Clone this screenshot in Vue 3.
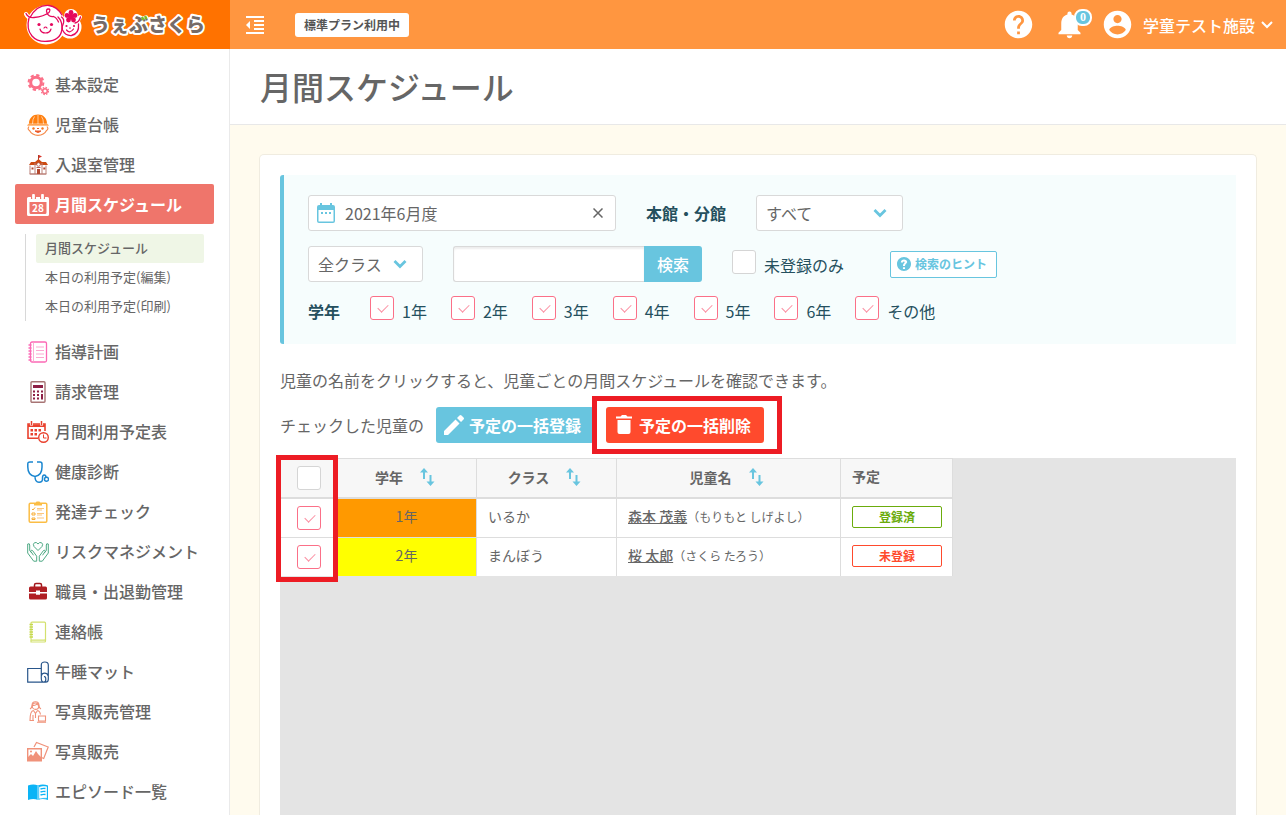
<script setup>
import { ref } from 'vue'

const menu = [
  { label: '基本設定', icon: '<g fill="none" stroke="#fb7088"><circle cx="9" cy="8.500" r="5.300" stroke-width="3"/><circle cx="9" cy="8.500" r="7.400" stroke-width="2" stroke-dasharray="3.300 2.510"/><circle cx="18" cy="17" r="2.300" stroke-width="1.600"/><circle cx="18" cy="17" r="3.600" stroke-width="1.200" stroke-dasharray="1.600 1.230"/></g>' },
  { label: '児童台帳', icon: '<path d="M2 9.500C2 4 6 .600 11 .600S20 4 20 9.500L22 11.500H0Z" fill="#ff7f0e"/><path d="M11 1v9M7.500 2.500Q5.500 5 5.500 10M14.500 2.500Q16.500 5 16.500 10M1 10h20" stroke="#fff" stroke-width=".6" fill="none"/><path d="M2 12.500Q0 15 2.500 16.500Q5 21.300 11 21.300T19.500 16.500Q22 15 20 12.500" fill="none" stroke="#f58b4c" stroke-width="1.200"/><circle cx="6.500" cy="14.500" r="1.200" fill="#f4751f"/><circle cx="15.500" cy="14.500" r="1.200" fill="#f4751f"/><path d="M8 17h6q-3 3-6 0M10 14.500h2" stroke="#ec5a29" fill="#ec5a29"/>' },
  { label: '入退室管理', icon: '<path d="M11.500 6V1" stroke="#b33a28"/><path d="M12 1l3 1.500-3 1.500z" fill="#d9352b"/><path d="M2 11l2-3h4l3.500-3 3.500 3h4l2 3z" fill="#cc4a12"/><path d="M3 11.500v8.500h16v-8.500M8 9v11M15 9v11M2.500 20h17" fill="none" stroke="#bb8078"/><circle cx="11.500" cy="10.500" r="1.800" fill="#fff" stroke="#b3584a" stroke-width=".8"/><path d="M4.500 13.500h2v2h-2zM16.300 13.500h2v2h-2zM10 15h3v5h-3z" fill="#b3482f"/><path d="M9.500 13.500h4" stroke="#b3584a"/>' },
  { label: '月間スケジュール', active: true, icon: '<path d="M1.500 3h19q1.500 0 1.500 1.500v16q0 1.500-1.500 1.500h-19Q0 22 0 20.500v-16Q0 3 1.500 3zM2.500 8v10.500q0 1.500 1.500 1.500h14q1.500 0 1.500-1.500V8z" fill="#fff" fill-rule="evenodd"/><path d="M6.500 1v4M15.500 1v4" stroke="#ef756b" stroke-width="5"/><path d="M6.500 1.200v3M15.500 1.200v3" stroke="#fff" stroke-width="2.800" stroke-linecap="round"/><text x="11" y="17.500" font-family="Noto Sans CJK JP, sans-serif" font-size="10" font-weight="700" text-anchor="middle" fill="#fff">28</text>' },
  { label: '指導計画', icon: '<rect x="3.500" y="1" width="16" height="20" rx="1.500" fill="#fff" stroke="#fb69b5" stroke-width="1.300"/><path d="M6.500 1v20" stroke="#fb9acb" stroke-width=".8"/><path d="M1.500 4h3M1.500 7h3M1.500 10h3M1.500 13h3M1.500 16h3M1.500 19h3" stroke="#fb69b5" stroke-width="1.300"/><path d="M9 6h8M9 9.500h8M9 13h8M9 16.500h8" stroke="#fca9d2"/>' },
  { label: '請求管理', icon: '<rect x="4" y=".8" width="14" height="20.400" rx="1" fill="#fff" stroke="#a77474" stroke-width="1.400"/><path d="M6 4h10v3H6z" fill="#8d1f45"/><path d="M6 9.500h2v2H6zM10 9.500h2v2h-2zM14 9.500h2v2h-2zM6 13h2v2H6zM10 13h2v2h-2zM6 16.500h2v2H6zM10 16.500h2v2h-2zM14 13h2v5.500h-2z" fill="#8d1f45"/>' },
  { label: '月間利用予定表', icon: '<path d="M11 17.200H1V3h17v7" fill="none" stroke="#e9412e" stroke-width="1.600"/><path d="M1 3.500h17v2.500H1z" fill="#e9412e"/><path d="M4.500 0v4.500M14.500 0v4.500" stroke="#fff" stroke-width="3"/><path d="M4.500 0v4M14.500 0v4" stroke="#e9412e" stroke-width="1.500"/><path d="M3.500 8h2.500v2.500H3.500zM7.500 8H10v2.500H7.500zM11.500 8H14v2.500h-2.500zM3.500 12H6v2.500H3.500zM7.500 12H10v2.500H7.500z" fill="#e9412e"/><circle cx="16.500" cy="16.500" r="4.800" fill="#fff" stroke="#e9412e" stroke-width="1.400"/><path d="M16.500 13.500v3.500h3" fill="none" stroke="#e9412e"/>' },
  { label: '健康診断', icon: '<path d="M6 1H3Q.8 1 .8 3v3q0 8.500 7.200 9.500Q15 14.500 15 6V3q0-2-2-2h-3M8 15.500q0 5.700 4 5.700T15.500 17q0-3 1.700-3t1.800 2.500" fill="none" stroke="#1a86d0" stroke-width="1.500"/><circle cx="19.500" cy="18.300" r="2" fill="none" stroke="#1a86d0" stroke-width="1.400"/>' },
  { label: '発達チェック', icon: '<rect x="2.200" y="2.200" width="17.600" height="19" rx="1.200" fill="none" stroke="#fbbd45" stroke-width="1.500"/><path d="M7 2.500q2 0 2.500-2h3q.5 2 2.500 2v2H7z" fill="#fbbd45"/><path d="M5 8l1 1 2-2.500M5 12h3v2H5zM5 17h3v1.500H5z" fill="none" stroke="#f8ad35"/><path d="M10 7.500h7M10 9h5M10 12.500h7M10 14h5M10 17h7" stroke="#fbc780"/>' },
  { label: 'リスクマネジメント', icon: '<path d="M11 9.500L7 5.500Q5.500 3 7.500 1.700 9.500.8 11 3 12.500.8 14.500 1.700 16.500 3 15 5.500z" fill="none" stroke="#4ea984"/><path d="M.7 3v9l6 8.200h3v-5L5.500 9.500q-1.500-1-1.800.8l2.800 4M.7 3q2-1 2 1v5.500l2 2.500" fill="none" stroke="#4ea984"/><path d="M21.300 3v9l-6 8.200h-3v-5l4.200-5.700q1.500-1 1.800.8l-2.800 4M21.300 3q-2-1-2 1v5.500l-2 2.500" fill="none" stroke="#4ea984"/>' },
  { label: '職員・出退勤管理', icon: '<path d="M7.500 6V4q0-1.500 1.500-1.500h4q1.500 0 1.500 1.500v2" fill="none" stroke="#a3191d" stroke-width="1.500"/><path d="M3.500 5.500h15q1.500 0 1.500 1.500v4h-7V9.500H9V11H2V7q0-1.500 1.500-1.500zM2 12.500h7v1.300h4v-1.300h7V17q0 1.500-1.500 1.500h-15Q2 18.500 2 17z" fill="#b01e23"/>' },
  { label: '連絡帳', icon: '<rect x="4" y="1.200" width="14.500" height="18" rx="1" fill="#fff" stroke="#d3e16e" stroke-width="1.200"/><path d="M4 19v2h13.500q1 0 1-1v-2" fill="none" stroke="#d3e16e" stroke-width="1.200"/><path d="M2.500 3.500h3.500M2.500 6h3.500M2.500 8.500h3.500M2.500 11h3.500M2.500 13.500h3.500M2.500 16h3.500" stroke="#c6d94f" stroke-width="1.400"/>' },
  { label: '午睡マット', icon: '<path d="M14 7.500H.7v13.700h18q2.600 0 2.600-3V4q0-3-3.500-3T14.300 4v13.500q0 3.500 2.500 3.500 2 0 2-2.800t-1.800-2.500M14.300 15q.5-2.800 3.300-2.800T21.300 15" fill="none" stroke="#29568b" stroke-width="1.200"/>' },
  { label: '写真販売管理', icon: '<g fill="none" stroke="#f0927a" stroke-width="1.100"><circle cx="8.500" cy="5.200" r="3.200"/><path d="M3 8Q5 7 5 4.500 5 .8 8.500.8T12 4.500Q12 7 14 8M5 4.500q4 0 5-1.500 1 1.500 2 1.500M6.500 9.500Q3 10 3 19.500h4M10.500 9.500q2.500.5 3 4M6.500 9.500l2 3 2-3M8.500 12v5M6 14v5"/><path d="M11.500 15h7v5h-7zM10 21.300h9"/></g>' },
  { label: '写真販売', icon: '<path d="M7 6L9.500 1.500 21.200 6l-4.500 11.500-2.200-1" fill="none" stroke="#f0927a" stroke-width="1.200"/><path d="M.7 7.700h13.600v12H.7z" fill="#fff" stroke="#f0927a" stroke-width="1.400"/><path d="M1 19v-3l3-3 2 2 3-5 2 3 3 3v4H1z" fill="#f0927a"/><circle cx="4" cy="10.500" r="1" fill="#f0927a"/>' },
  { label: 'エピソード一覧', icon: '<path d="M1 4.500q5.500-2 10 0 4.500-2 10 0v14.500q-5.500-2-10 0-4.500-2-10 0z" fill="#0bb4f6"/><path d="M11 5v14M12.500 6.300q3.500-1.300 7-.5v11q-3.500-.5-7 .5z" fill="#fff" stroke="#fff" stroke-width=".7"/><path d="M13.500 8q2.500-1 5-.5M13.500 11q2.500-1 5-.5M13.500 14q2.500-1 5-.5" fill="none" stroke="#0bb4f6" stroke-width="1.400"/>' }
]
const subMenu = ['月間スケジュール', '本日の利用予定(編集)', '本日の利用予定(印刷)']
const grades = ref(['1年', '2年', '3年', '4年', '5年', '6年', 'その他'].map(name => ({ name, checked: true })))
const month = ref('2021年6月度')
const keyword = ref('')
const unregistered = ref(false)
const columns = ['学年', 'クラス', '児童名']
const rows = ref([
  { grade: '1年', tone: 'orange', group: 'いるか', name: '森本 茂義', kana: '（もりもと しげよし）', status: '登録済', done: true, checked: true },
  { grade: '2年', tone: 'yellow', group: 'まんぼう', name: '桜 太郎', kana: '（さくら たろう）', status: '未登録', done: false, checked: true }
])
</script>

<template>
  <div class="app">
    <header class="topbar">
      <a class="logo" href="#" aria-label="うぇぶさくら">
        <svg width="184" height="46" viewBox="0 0 184 46">
          <g stroke-linecap="round" stroke-linejoin="round">
            <g fill="#fff" stroke="#fff" stroke-width="4">
              <circle cx="22" cy="24" r="17.500" /><circle cx="46" cy="26" r="9.500" />
              <path d="M2 13q2 4 5 4M56 16l-3 5" />
              <circle cx="47" cy="15" r="5" />
            </g>
            <g fill="none" stroke="#e5085d" stroke-width="1.300">
              <path d="M2 12.500q2 4.500 8 4 10-1 15-5 2-3.500-.5-3.500-3 0-1.500 4 2 4 6.500 3.500 3 1 5 5.500" />
              <path d="M6 16.500Q13 3.500 25 4.500q8 1 13 9.500" />
              <path d="M5 17Q2 28 8 35t18 5 12-14q0-6-4-10" />
              <path d="M37.500 16q3 2 2 6-2 4-1 7 3 6 9 5.500 8-2 7-11.500M51 22q4-.5 5.500-6" />
              <path d="M16 28q1 4 5.500 4t5.500-4M20 27q1.500-2 3 0M42.500 29q3.500 4 7-1M45.500 27h1" stroke-width="1.200" />
            </g>
            <g fill="#e5085d"><circle cx="15" cy="23.500" r="1.600" /><circle cx="27.500" cy="23.500" r="1.600" /><circle cx="42.500" cy="25" r="1.100" /><circle cx="50" cy="25" r="1.100" />
              <circle cx="47" cy="11.500" r="2.400" /><circle cx="51" cy="14.500" r="2.400" /><circle cx="49.500" cy="19" r="2.400" /><circle cx="44.500" cy="19" r="2.400" /><circle cx="43" cy="14.500" r="2.400" /><circle cx="47" cy="15.700" r="3" /></g>
          </g>
          <text class="logo-text" x="67" y="31">うぇぶさくら</text>
          <path d="M118 16l1.500 3M121 15l1.500 3" stroke="#7fbe26" stroke-width="2.400" />
        </svg>
      </a>
      <button class="icon-button fold" aria-label="メニューを閉じる">
        <svg width="18" height="18" viewBox="0 0 18 18"><path d="M0 1h18M8 5h10M8 9h10M8 13h10M0 17h18" stroke="#fff" stroke-width="2" /><path d="M4 5v8L0 9z" fill="#fff" /></svg>
      </button>
      <span class="plan">標準プラン利用中</span>
      <nav class="tools">
        <button class="icon-button" aria-label="ヘルプ"><svg width="33" height="33" viewBox="0 0 24 24"><path fill="#fff" d="M12 2C6.480 2 2 6.480 2 12s4.480 10 10 10 10-4.480 10-10S17.520 2 12 2zm1 17h-2v-2h2v2zm2.070-7.750l-.9.920C13.450 12.900 13 13.500 13 15h-2v-.5c0-1.100.45-2.100 1.170-2.830l1.240-1.260c.37-.36.59-.86.59-1.410 0-1.100-.9-2-2-2s-2 .9-2 2H8c0-2.210 1.790-4 4-4s4 1.790 4 4c0 .88-.36 1.680-.93 2.250z" /></svg></button>
        <button class="icon-button bell" aria-label="お知らせ"><svg width="33" height="33" viewBox="0 0 24 24"><path fill="#fff" d="M12 22c1.100 0 2-.9 2-2h-4c0 1.100.89 2 2 2zm6-6v-5c0-3.070-1.640-5.640-4.500-6.320V4c0-.83-.67-1.500-1.500-1.500s-1.500.67-1.500 1.500v.68C7.630 5.360 6 7.920 6 11v5l-2 2v1h16v-1l-2-2z" /></svg><span class="count">0</span></button>
        <button class="account">
          <svg width="33" height="33" viewBox="0 0 24 24"><path fill="#fff" d="M12 2C6.480 2 2 6.480 2 12s4.480 10 10 10 10-4.480 10-10S17.520 2 12 2zm0 3c1.660 0 3 1.340 3 3s-1.340 3-3 3-3-1.340-3-3 1.340-3 3-3zm0 14.200c-2.500 0-4.710-1.280-6-3.220.03-1.990 4-3.080 6-3.080 1.990 0 5.970 1.090 6 3.080-1.290 1.940-3.500 3.220-6 3.220z" /></svg>
          <span>学童テスト施設</span>
          <svg width="12" height="8" viewBox="0 0 12 8"><path d="M1 1l5 5 5-5" fill="none" stroke="#fff" stroke-width="2" /></svg>
        </button>
      </nav>
    </header>

    <div class="body">
      <aside class="sidebar">
        <ul class="menu">
          <li v-for="item in menu" :key="item.label">
            <a href="#" class="menu-item" :class="{ active: item.active }">
              <svg width="22" height="22" viewBox="0 0 22 22" v-html="item.icon"></svg>{{ item.label }}
            </a>
            <ul v-if="item.active" class="submenu">
              <li v-for="(sub, i) in subMenu" :key="sub"><a href="#" :class="{ current: i === 0 }">{{ sub }}</a></li>
            </ul>
          </li>
        </ul>
      </aside>

      <main class="main">
        <div class="page-title"><h1>月間スケジュール</h1></div>
        <section class="card">
          <form class="filter" @submit.prevent>
            <div class="row">
              <div class="field date">
                <svg width="18" height="20" viewBox="0 0 18 20"><path fill="#68c5df" fill-rule="evenodd" d="M3 0h2v2h8V0h2v2h1q2 0 2 2v14q0 2-2 2H2q-2 0-2-2V4q0-2 2-2h1zM1.500 7v11q0 .5.500.5h14q.5 0 .5-.5V7z" /><path d="M4 10h2M8 10h2M12 10h2" stroke="#68c5df" stroke-width="2" /></svg>
                <input v-model="month" type="text" aria-label="対象月" />
                <button type="button" class="clear" aria-label="クリア" @click="month = ''"><svg width="10" height="10" viewBox="0 0 10 10"><path d="M.5.5l9 9M9.500.5l-9 9" stroke="#666" stroke-width="1.500" /></svg></button>
              </div>
              <label class="caption branch-label" for="branch">本館・分館</label>
              <div class="field select branch">
                <select id="branch"><option>すべて</option></select>
                <svg width="14" height="10" viewBox="0 0 14 10"><path d="M1.500 2L7 7.500 12.500 2" fill="none" stroke="#68c5df" stroke-width="2.800" /></svg>
              </div>
            </div>
            <div class="row second">
              <div class="field select class">
                <select aria-label="クラス"><option>全クラス</option></select>
                <svg width="14" height="10" viewBox="0 0 14 10"><path d="M1.500 2L7 7.500 12.500 2" fill="none" stroke="#68c5df" stroke-width="2.800" /></svg>
              </div>
              <div class="search"><input v-model="keyword" type="text" aria-label="検索キーワード" /><button type="submit">検索</button></div>
              <label class="check unregistered"><input v-model="unregistered" type="checkbox" />未登録のみ</label>
              <button type="button" class="hint">
                <svg width="14" height="14" viewBox="2 2 20 20"><path fill="#68c5df" d="M12 2C6.480 2 2 6.480 2 12s4.480 10 10 10 10-4.480 10-10S17.520 2 12 2zm1.500 17h-3v-2.500h3v2.500zm1.500-7.500c-1 1-1.500 1.500-1.500 3.500h-3c0-2 .5-3 1.700-4.200 1.300-1.300.8-2.500-.2-2.500s-1.500.7-1.500 1.700h-3c0-3 2-4.500 4.500-4.500s4.500 1.500 4.500 3.800c0 1-.6 1.500-1.500 2.200z" /></svg>検索のヒント
              </button>
            </div>
            <div class="row grades" role="group" aria-labelledby="grade-caption">
              <span id="grade-caption" class="caption">学年</span>
              <label v-for="grade in grades" :key="grade.name" class="check"><input v-model="grade.checked" type="checkbox" />{{ grade.name }}</label>
            </div>
          </form>

          <p class="note">児童の名前をクリックすると、児童ごとの月間スケジュールを確認できます。</p>
          <div class="actions">
            <span>チェックした児童の</span>
            <button class="bulk register"><svg width="20" height="20" viewBox="0 0 20 20"><path fill="#fff" d="M0 16L11.500 4.500l4 4L4 20H0zM13 3l2.500-2.500q1-1 2 0l2 2q1 1 0 2L17 7z" /></svg>予定の一括登録</button>
            <div class="marked">
              <button class="bulk delete"><svg width="16" height="20" viewBox="0 0 16 20"><path fill="#fff" d="M0 1.500h4.500L6 0h4l1.500 1.500H16v2H0zM1.500 5h13v12q0 2-2 2h-9q-2 0-2-2z" /></svg>予定の一括削除</button>
            </div>
          </div>

          <div class="grid">
            <table>
              <colgroup><col class="c1" /><col class="c2" /><col class="c3" /><col class="c4" /><col class="c5" /></colgroup>
              <thead>
                <tr>
                  <th class="pick"><input type="checkbox" aria-label="すべて選択" /></th>
                  <th v-for="column in columns" :key="column">
                    <button class="sort">{{ column }}<svg width="15" height="18" viewBox="0 0 15 18"><path d="M4 2v9M10.500 7v9" stroke="#68c5df" stroke-width="2" /><path d="M0 4.500L4 0l4 4.500zM6.500 13.500l4 4.500 4-4.500z" fill="#68c5df" /></svg></button>
                  </th>
                  <th class="plain">予定</th>
                </tr>
              </thead>
              <tbody>
                <tr v-for="row in rows" :key="row.name">
                  <td class="pick"><input v-model="row.checked" type="checkbox" :aria-label="row.name" /></td>
                  <td class="grade" :class="row.tone">{{ row.grade }}</td>
                  <td>{{ row.group }}</td>
                  <td><a href="#">{{ row.name }}</a><small>{{ row.kana }}</small></td>
                  <td class="state"><span class="status" :class="{ done: row.done }">{{ row.status }}</span></td>
                </tr>
              </tbody>
            </table>
          </div>
        </section>
      </main>
    </div>
  </div>
</template>

<style>
body { margin: 0; }
</style>

<style scoped>
*, *::after { box-sizing: border-box; }
.app { display: flex; flex-direction: column; height: 100vh; overflow: hidden; color: #666; background: #fff; font: 400 16px/24px "Noto Sans CJK JP", sans-serif; }
button, input, select { margin: 0; font: inherit; color: inherit; }
button { border: 0; padding: 0; background: none; cursor: pointer; }
a { color: inherit; text-decoration: none; }
svg { display: block; flex: none; }
ul { margin: 0; padding: 0; list-style: none; }

.topbar { display: flex; align-items: center; flex: none; height: 49px; background: #ff9640; color: #fff; }
.logo { flex: none; width: 230px; height: 49px; padding: 1px 0 0 24px; background: #ff7200; }
.logo-text { font-size: 19px; font-weight: 900; fill: #766b68; stroke: #fff; stroke-width: 4px; stroke-linejoin: round; paint-order: stroke; }
.fold { margin: 0 31px 0 16px; }
.plan { padding: 0 9px; border-radius: 3px; background: #fff; color: #555; font-size: 12px; font-weight: 700; }
.tools { display: flex; align-items: center; margin-left: auto; padding-right: 13px; }
.bell { position: relative; margin: 0 15px 0 18px; }
.count { position: absolute; top: 1px; right: -6px; width: 18px; height: 17px; border: 2px solid #fff; border-radius: 8px; background: #68c5df; color: #fff; font: 700 12px/13px "Liberation Serif", serif; text-align: center; }
.account { display: flex; align-items: center; gap: 9px; font-weight: 500; line-height: 22px; }
.account svg:last-child { margin-left: -3px; }

.body { display: flex; flex: 1; min-height: 0; }
.sidebar { flex: none; width: 230px; padding: 15px 15px 0; border-right: 1px solid #eaeaea; overflow: hidden; }
.menu-item { display: flex; align-items: center; gap: 6px; height: 40px; padding-left: 12px; border-radius: 2px; font-weight: 500; white-space: nowrap; }
.menu-item svg { margin-top: 2px; }
.menu-item.active { background: #ef756b; color: #fff; font-weight: 700; }
.submenu { margin: 10px; padding-left: 10px; border-left: 1px solid #d8d8d8; }
.submenu a { display: block; padding: 0 0 2px 9px; border-radius: 2px; font-size: 13px; line-height: 27px; }
.submenu .current { background: #eff6e6; font-weight: 500; }

.main { display: flex; flex-direction: column; flex: 1; min-width: 0; background: #fffbee; }
.page-title { flex: none; padding: 17px 30px 18px; border-bottom: 1px solid #e8e8e8; background: #fff; }
h1 { margin: 0; font-size: 32px; line-height: 40px; font-weight: 500; }
.card { display: flex; flex-direction: column; flex: 1; min-height: 0; margin: 29px 29px 0; padding: 20px 20px 0; border: 1px solid #f0ece0; border-bottom: 0; border-radius: 5px 5px 0 0; background: #fff; }

.filter { flex: none; padding: 20px 24px 18px; border-left: 4px solid #68c5df; border-radius: 3px 0 0 3px; background: #f6fdfd; color: #25505e; }
.row { display: flex; align-items: center; }
.second { margin-top: 15px; }
.field { display: flex; align-items: center; height: 36px; border: 1px solid #d9d9d9; border-radius: 3px; background: #fff; color: #666; }
.date { width: 308px; padding: 0 12px 0 8px; }
.date input { flex: 1; min-width: 0; padding: 0 0 0 10px; border: 0; background: none; outline: 0; }
.caption { font-weight: 700; }
.branch-label { margin: 0 30px; }
.select { position: relative; }
.select select { width: 100%; height: 34px; padding: 0 30px 0 9px; border: 0; background: none; appearance: none; outline: 0; }
.select svg { position: absolute; top: 12px; right: 15px; pointer-events: none; }
.branch { width: 147px; }
.class { width: 115px; }
.search { display: flex; height: 36px; margin: 0 30px; }
.search input { width: 191px; padding: 0 8px; border: 1px solid #d9d9d9; border-right: 0; border-radius: 3px 0 0 3px; box-shadow: inset 0 2px 2px #eee; outline: 0; }
.search button { padding: 0 13px; border-radius: 0 3px 3px 0; background: #68c5df; color: #fff; font-weight: 500; }
.check { display: flex; align-items: flex-start; gap: 8px; line-height: 30px; }
.unregistered { height: 32px; align-self: flex-end; margin-right: 46px; }
.hint { display: flex; align-items: center; gap: 4px; height: 27px; padding: 0 9px 0 6px; border: 1px solid #68c5df; border-radius: 2px; background: #fff; color: #68c5df; font-size: 12px; font-weight: 700; }
.grades { gap: 24px; margin-top: 14px; }
.grades .caption { margin-right: 6px; }

input[type="checkbox"] { display: block; flex: none; position: relative; width: 24px; height: 24px; border: 1px solid #d5d5d5; border-radius: 3px; background: #fff; appearance: none; }
input[type="checkbox"]:checked { border-color: #fb7088; }
input[type="checkbox"]:checked::after { content: ""; position: absolute; left: 9px; top: 5px; width: 6px; height: 10px; border: solid #fb8fa2; border-width: 0 1px 1px 0; transform: rotate(45deg); }

.note { margin: 24px 0 15px; }
.actions { display: flex; align-items: center; flex: none; gap: 12px; margin-bottom: 15px; }
.bulk { display: flex; align-items: center; height: 36px; border-radius: 3px; color: #fff; font-weight: 700; }
.register { gap: 5px; padding: 0 13px 0 8px; background: #68c5df; }
.delete { gap: 7px; padding: 0 13px 0 10px; background: #ff4a2d; }
.marked { position: relative; }
.marked::after { content: ""; position: absolute; inset: -11px -18px -11px -14px; border: 5px solid #ed1c24; pointer-events: none; }

.grid { position: relative; flex: 1; min-height: 0; background: #e4e4e4; }
.grid::after { content: ""; position: absolute; top: -3px; left: -4px; width: 62px; height: 127px; border: 5px solid #ed1c24; pointer-events: none; }
table { width: 673px; table-layout: fixed; border-spacing: 0; font-size: 14px; line-height: 22px; }
.c1 { width: 58px; }
.c2 { width: 139px; }
.c3 { width: 140px; }
.c4 { width: 224px; }
.c5 { width: 112px; }
th { height: 41px; padding: 0 11px 4px; border: solid #ddd; border-width: 1px 1px 2px 0; background: #f7f7f7; font-weight: 700; }
.plain { text-align: left; }
.sort { display: inline-flex; align-items: center; gap: 17px; padding-right: 4px; vertical-align: middle; }
td { height: 39px; padding: 0 11px 4px; border: solid #ddd; border-width: 0 1px 1px 0; background: #fff; white-space: nowrap; }
tr:last-child td { height: 38px; border-bottom: 0; }
th.pick, td.pick { padding: 0 0 0 17px; }
td.state { padding-bottom: 2px; }
td.grade { padding-right: 12px; text-align: center; }
td.orange { background: #ff9900; }
td.yellow { background: #ffff00; }
td a { font-weight: 500; text-decoration: underline; }
small { font-size: 12px; }
.status { display: block; width: 90px; border: 1px solid #ff4a2d; border-radius: 2px; color: #ff4a2d; font-size: 12px; font-weight: 700; line-height: 20px; text-align: center; }
.status.done { border-color: #6bac0c; color: #6bac0c; }
</style>
